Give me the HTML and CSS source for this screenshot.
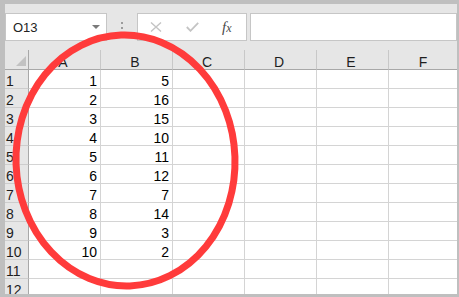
FILE: index.html
```html
<!DOCTYPE html>
<html lang="zh">
<head>
    <meta charset="UTF-8">
    <title>Sheet</title>
    <link rel="stylesheet" href="styles.css">
</head>
<body>

    <div class="window">
        <div class="formula-bar">
            <div class="name-box">
                <span>O13</span>
                <span class="caret"></span>
            </div>
            <div class="grip"><i></i><i></i><i></i></div>
            <div class="fx-box">
                <svg class="icon" width="12" height="10" viewBox="0 0 12 10">
                    <path d="M1 0.5 L11 9.5 M11 0.5 L1 9.5" stroke="#c4c4c4" stroke-width="1.4" fill="none"/>
                </svg>
                <svg class="icon" width="13" height="10" viewBox="0 0 13 10">
                    <path d="M0.8 5 L4.5 8.8 L12.2 0.8" stroke="#c4c4c4" stroke-width="1.8" fill="none"/>
                </svg>
                <span class="fx">f<span>x</span></span>
            </div>
            <div class="formula-input"></div>
        </div>

        <div class="sheet">
            <div class="row head">
                <div class="rh corner">
                    <svg width="10" height="10" viewBox="0 0 10 10"><polygon points="10,0 10,10 0,10" fill="#c2c2c2"/></svg>
                </div>
                <div class="cell">A</div>
                <div class="cell">B</div>
                <div class="cell">C</div>
                <div class="cell">D</div>
                <div class="cell">E</div>
                <div class="cell">F</div>
            </div>
            <div class="row"><div class="rh">1</div><div class="cell num">1</div><div class="cell num">5</div><div class="cell"></div><div class="cell"></div><div class="cell"></div><div class="cell"></div></div>
            <div class="row"><div class="rh">2</div><div class="cell num">2</div><div class="cell num">16</div><div class="cell"></div><div class="cell"></div><div class="cell"></div><div class="cell"></div></div>
            <div class="row"><div class="rh">3</div><div class="cell num">3</div><div class="cell num">15</div><div class="cell"></div><div class="cell"></div><div class="cell"></div><div class="cell"></div></div>
            <div class="row"><div class="rh">4</div><div class="cell num">4</div><div class="cell num">10</div><div class="cell"></div><div class="cell"></div><div class="cell"></div><div class="cell"></div></div>
            <div class="row"><div class="rh">5</div><div class="cell num">5</div><div class="cell num">11</div><div class="cell"></div><div class="cell"></div><div class="cell"></div><div class="cell"></div></div>
            <div class="row"><div class="rh">6</div><div class="cell num">6</div><div class="cell num">12</div><div class="cell"></div><div class="cell"></div><div class="cell"></div><div class="cell"></div></div>
            <div class="row"><div class="rh">7</div><div class="cell num">7</div><div class="cell num">7</div><div class="cell"></div><div class="cell"></div><div class="cell"></div><div class="cell"></div></div>
            <div class="row"><div class="rh">8</div><div class="cell num">8</div><div class="cell num">14</div><div class="cell"></div><div class="cell"></div><div class="cell"></div><div class="cell"></div></div>
            <div class="row"><div class="rh">9</div><div class="cell num">9</div><div class="cell num">3</div><div class="cell"></div><div class="cell"></div><div class="cell"></div><div class="cell"></div></div>
            <div class="row"><div class="rh">10</div><div class="cell num">10</div><div class="cell num">2</div><div class="cell"></div><div class="cell"></div><div class="cell"></div><div class="cell"></div></div>
            <div class="row"><div class="rh">11</div><div class="cell"></div><div class="cell"></div><div class="cell"></div><div class="cell"></div><div class="cell"></div><div class="cell"></div></div>
            <div class="row"><div class="rh">12</div><div class="cell"></div><div class="cell"></div><div class="cell"></div><div class="cell"></div><div class="cell"></div><div class="cell"></div></div>
        </div>

        <!-- red hand-drawn circle over columns A and B -->
        <svg class="mark" width="459" height="297" viewBox="0 0 459 297">
            <ellipse cx="125.5" cy="160.5" rx="109.5" ry="125.5" transform="rotate(-2 125.5 160.5)"
                     fill="none" stroke="#ff3b3b" stroke-width="7"/>
        </svg>
    </div>

</body>
</html>
```

FILE: styles.css
```css
html, body {
    margin: 0;
    padding: 0;
    overflow: hidden;
}
body {
    font-family: "Liberation Sans", Arial, sans-serif;
    color: #000;
}
.window {
    position: relative;
    width: 459px;
    height: 297px;
    box-sizing: border-box;
    border-style: solid;
    border-color: #bfbfbf;
    border-width: 4px 2px 3px 5px;
    background-color: #fff;
    overflow: hidden;
}
.formula-bar {
    display: flex;
    align-items: flex-start;
    height: 46px;
    padding-top: 9px;
    box-sizing: border-box;
    background-color: #e6e6e6;
}
.name-box {
    display: flex;
    align-items: center;
    justify-content: space-between;
    width: 102px;
    height: 28px;
    box-sizing: border-box;
    padding: 0 6px 0 7px;
    background-color: #fff;
    border: 1px solid #c6c6c6;
    font-size: 13px;
    color: #222;
}
.caret {
    width: 0;
    height: 0;
    border-left: 4px solid transparent;
    border-right: 4px solid transparent;
    border-top: 4px solid #7a7a7a;
}
.grip {
    display: flex;
    flex-direction: column;
    align-items: center;
    gap: 3px;
    width: 30px;
    padding-top: 9px;
}
.grip i {
    display: block;
    width: 2px;
    height: 2px;
    background-color: #9c9c9c;
}
.fx-box {
    display: flex;
    align-items: center;
    width: 110px;
    height: 28px;
    box-sizing: border-box;
    padding-left: 12px;
    background-color: #fff;
    border: 1px solid #c6c6c6;
}
.fx-box .icon {
    margin-right: 24px;
}
.fx-box .icon + .icon {
    margin-right: 23px;
}
.fx {
    font-family: "Liberation Serif", "Times New Roman", serif;
    font-style: italic;
    font-size: 15px;
    color: #4a4a4a;
}
.fx span {
    font-size: 12px;
}
.formula-input {
    flex: 1;
    height: 28px;
    box-sizing: border-box;
    margin-left: 3px;
    background-color: #fff;
    border: 1px solid #c6c6c6;
}
.sheet {
    font-size: 14px;
}
.row {
    display: flex;
    flex-wrap: nowrap;
    height: 19px;
}
.row.head {
    height: 20px;
}
.rh, .cell {
    flex-shrink: 0;
    height: 18px;
    box-sizing: content-box;
    line-height: 14px;
    padding-top: 4px;
    box-sizing: border-box;
    border-bottom: 1px solid #d4d4d4;
}
.rh {
    width: 24px;
    height: 19px;
    padding-left: 1px;
    background-color: #e6e6e6;
    border-right: 1px solid #a8a8a8;
    border-bottom-color: #cdcdcd;
    color: #1e1e1e;
}
.cell {
    width: 72px;
    height: 19px;
    padding-right: 3px;
    border-right: 1px solid #d4d4d4;
}
.num {
    text-align: right;
}
.head .rh, .head .cell {
    height: 20px;
    padding-top: 5px;
    background-color: #e6e6e6;
    border-bottom-color: #a8a8a8;
    border-right-color: #c8c8c8;
    text-align: center;
    color: #1e1e1e;
}
.head .corner {
    display: flex;
    justify-content: flex-end;
    align-items: flex-end;
    padding: 0 2px 3px 0;
    border-right-color: #a8a8a8;
}
.head .corner svg {
    display: block;
}
.mark {
    position: absolute;
    left: -5px;
    top: -4px;
}
```
